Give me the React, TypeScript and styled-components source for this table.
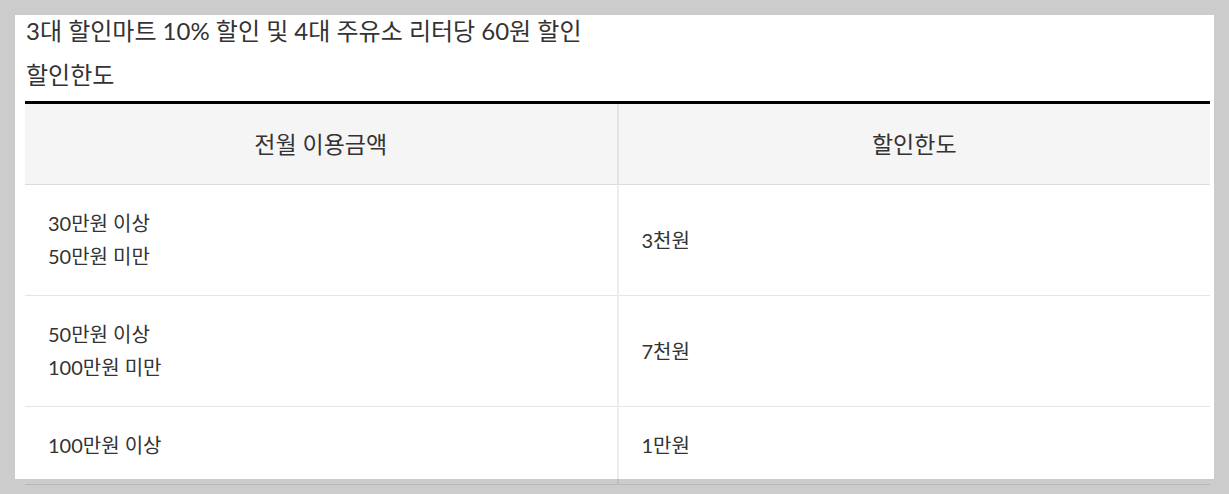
import React from "react";
import styled, { createGlobalStyle } from "styled-components";

const Global = createGlobalStyle`
  html, body { margin: 0; padding: 0; background: #cccccc; }
  body { font-family: Lato, "Noto Sans CJK KR", sans-serif; color: #333; }
  * { box-sizing: border-box; }
`;

const Page = styled.div`
  padding: 15px 15px 0 15px;
  height: 494px;
  overflow: hidden;
`;

const Panel = styled.section`
  width: 1199px;
  height: 464px;
  background: #fff;
  padding: 0 4px 0 10px;
`;

const Title = styled.h2`
  margin: 0;
  font-size: 24px;
  font-weight: 400;
  line-height: 32px;
  color: #333;
  padding-left: 1px;
`;

const Subtitle = styled.h3`
  margin: 0;
  padding: 12px 0 0 1px;
  font-size: 24px;
  font-weight: 400;
  line-height: 32px;
  color: #333;
`;

const Table = styled.table`
  margin-top: 10px;
  width: 1185px;
  border-collapse: collapse;
  table-layout: fixed;
  border-top: 3px solid #000;
`;

const Th = styled.th`
  background: #f5f5f5;
  font-weight: 400;
  font-size: 23px;
  line-height: 36px;
  padding: 22px 0;
  text-align: center;
  color: #333;
  border-bottom: 1px solid rgba(0, 0, 0, 0.1);
  & + & { border-left: 2px solid rgba(0, 0, 0, 0.07); }
`;

const Td = styled.td`
  font-size: 20px;
  line-height: 33px;
  padding: 22px 23px;
  color: #333;
  text-align: left;
  vertical-align: middle;
  border-bottom: 1px solid rgba(0, 0, 0, 0.1);
  & + & { border-left: 2px solid rgba(0, 0, 0, 0.07); }
`;

const rows: { amount: string[]; limit: string }[] = [
  { amount: ["30만원 이상", "50만원 미만"], limit: "3천원" },
  { amount: ["50만원 이상", "100만원 미만"], limit: "7천원" },
  { amount: ["100만원 이상"], limit: "1만원" },
];

export default function App() {
  return (
    <>
      <Global />
      <Page>
        <Panel>
          <Title>3대 할인마트 10% 할인 및 4대 주유소 리터당 60원 할인</Title>
          <Subtitle>할인한도</Subtitle>
          <Table>
            <thead>
              <tr>
                <Th>전월 이용금액</Th>
                <Th>할인한도</Th>
              </tr>
            </thead>
            <tbody>
              {rows.map((r, i) => (
                <tr key={i}>
                  <Td>
                    {r.amount.map((a, j) => (
                      <React.Fragment key={j}>
                        {j > 0 && <br />}
                        {a}
                      </React.Fragment>
                    ))}
                  </Td>
                  <Td>{r.limit}</Td>
                </tr>
              ))}
            </tbody>
          </Table>
        </Panel>
      </Page>
    </>
  );
}
